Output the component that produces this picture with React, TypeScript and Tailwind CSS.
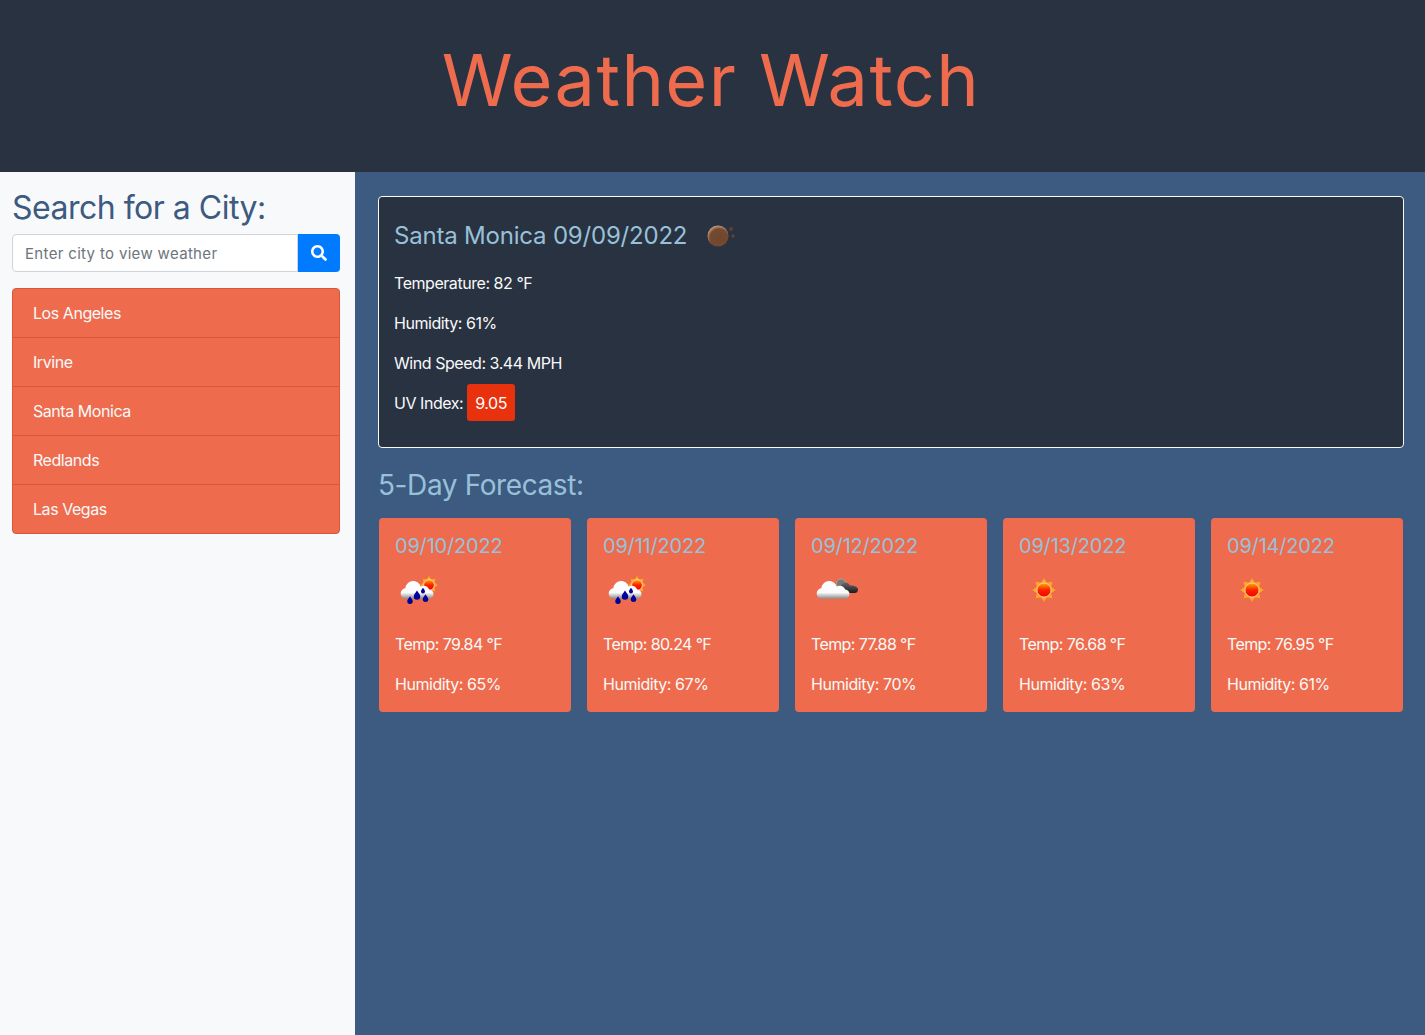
import React from "react";
import { FaSearch } from "react-icons/fa";

const cities = ["Los Angeles", "Irvine", "Santa Monica", "Redlands", "Las Vegas"];

const forecast = [
  { date: "09/10/2022", icon: "rain", temp: "79.84", humidity: "65" },
  { date: "09/11/2022", icon: "rain", temp: "80.24", humidity: "67" },
  { date: "09/12/2022", icon: "clouds", temp: "77.88", humidity: "70" },
  { date: "09/13/2022", icon: "sun", temp: "76.68", humidity: "63" },
  { date: "09/14/2022", icon: "sun", temp: "76.95", humidity: "61" },
];

const Defs = () => (
  <defs>
    <linearGradient id="sunFill" x1="0" y1="0" x2="0" y2="1">
      <stop offset="0" stopColor="#ffb000" />
      <stop offset="0.5" stopColor="#ff2000" />
      <stop offset="1" stopColor="#f00000" />
    </linearGradient>
    <linearGradient id="cloudFill" x1="0" y1="0" x2="0" y2="1">
      <stop offset="0" stopColor="#ffffff" />
      <stop offset="0.65" stopColor="#fbfbfb" />
      <stop offset="1" stopColor="#8a8a8a" />
    </linearGradient>
    <linearGradient id="darkFill" x1="0" y1="0" x2="0" y2="1">
      <stop offset="0" stopColor="#666666" />
      <stop offset="1" stopColor="#1c1c1c" />
    </linearGradient>
    <radialGradient id="moonFill" cx="0.55" cy="0.6" r="0.62">
      <stop offset="0" stopColor="#6f4630" />
      <stop offset="0.7" stopColor="#75492f" />
      <stop offset="1" stopColor="#d0a88a" />
    </radialGradient>
  </defs>
);

const Sun = ({ cx, cy, r }: { cx: number; cy: number; r: number }) => (
  <g>
    {[0, 45, 90, 135, 180, 225, 270, 315].map((a) => (
      <polygon
        key={a}
        points={`${cx - r * 0.55},${cy - r * 1.05} ${cx},${cy - r * 1.85} ${cx + r * 0.55},${cy - r * 1.05}`}
        fill="#ffa820"
        transform={`rotate(${a} ${cx} ${cy})`}
      />
    ))}
    <circle cx={cx} cy={cy} r={r * 1.12} fill="url(#sunFill)" stroke="#ffd8b0" strokeWidth="0.9" />
  </g>
);

const Cloud = () => (
  <path
    transform="translate(-3.500 -3) scale(1.15)"
    d="M13 32c-3 0-5-2-5-4.600 0-2.400 1.800-4.300 4-4.500 0.400-3.600 3.300-6.400 6.800-6.400 3.100 0 5.700 2 6.600 4.900 0.800-0.500 1.700-0.700 2.600-0.700 2.200 0 4 1.300 4.800 3.200 2.300 0.100 3.700 1.900 3.700 3.900 0 2.400-1.800 4.200-4.200 4.200z"
    fill="url(#cloudFill)"
  />
);

const Drop = ({ x, y, s = 1 }: { x: number; y: number; s?: number }) => (
  <path
    d={`M${x} ${y - 3.4 * s}c${1.2 * s} ${2 * s} ${2.500 * s} ${3 * s} ${2.500 * s} ${4.500 * s}a${2.500 * s} ${2.500 * s} 0 0 1 ${-5 * s} 0c0 ${-1.500 * s} ${1.300 * s} ${-2.500 * s} ${2.500 * s} ${-4.500 * s}z`}
    fill="#00009c"
  />
);

const WeatherIcon = ({ kind }: { kind: string }) => (
  <svg width="50" height="50" viewBox="0 0 50 50" className="block">
    <Defs />
    {kind === "rain" && (
      <>
        <Sun cx={34} cy={20} r={4.800} />
        <Cloud />
        <Drop x={15} y={35} s={1.100} />
        <Drop x={22} y={30} s={1.300} />
        <Drop x={28} y={25.500} s={0.800} />
        <Drop x={30.500} y={33} s={1.100} />
      </>
    )}
    {kind === "clouds" && (
      <>
        <circle cx="30" cy="18.500" r="4.500" fill="#777" stroke="#aaa" strokeWidth="0.8" />
        <path d="M30 28c-2 0-3-1.400-3-3 0-3 1.600-4 3.200-4.200 0.800-1.700 2.400-3.200 4.200-3.200 2 0 3.700 1.200 4.500 3 0.400-0.100 0.700-0.100 1.100-0.100 3.500 0 7 1.600 7 3.900 0 2.200-1.500 3.600-3.300 3.600z" fill="url(#darkFill)" />
        <Cloud />
      </>
    )}
    {kind === "sun" && <Sun cx={25} cy={25} r={6.300} />}
    {kind === "moon" && (
      <>
        <circle cx="24" cy="25" r="10.500" fill="url(#moonFill)" />
        <circle cx="37" cy="18" r="2" fill="#5f4030" />
        <circle cx="39" cy="25" r="1.800" fill="#5f4030" />
      </>
    )}
  </svg>
);

const App = () => {
  return (
    <div className="min-h-[1035px] flex flex-col font-['Inter','Lato',sans-serif] text-base tracking-[-0.45px]">
      {/* Header */}
      <header className="h-[172px] bg-[#293241] flex justify-center pt-[37px]">
        <h1 className="text-[72px] leading-[86px] font-normal text-[#ee6c4d] tracking-[1.4px] ml-[-3px]">Weather Watch</h1>
      </header>

      <div className="flex flex-1">
        {/* Sidebar */}
        <aside className="w-[355px] bg-[#f8f9fa] pl-3 pr-[15px] pt-[17px]">
          <h2 className="text-[32px] leading-[38px] font-normal text-[#3d5a80] mb-[7px] tracking-[-0.5px]">Search for a City:</h2>
          <div className="flex h-[38px] mb-4">
            <input
              placeholder="Enter city to view weather"
              className="flex-1 min-w-0 px-3 pt-[2px] bg-white border border-[#ced4da] rounded-l text-[15px] tracking-[0.33px] text-[#495057] placeholder:text-[#6c757d] outline-none"
            />
            <button className="w-[42px] bg-[#007bff] text-white rounded-r flex items-center justify-center">
              <FaSearch size={16} />
            </button>
          </div>
          <ul className="border border-[#d9563a] rounded overflow-hidden bg-[#ee6c4d] text-[#f8f9fa]">
            {cities.map((city, i) => (
              <li
                key={city}
                className={i > 0 ? "h-[49px] px-5 flex items-center border-t border-[#d9563a]" : "h-[48px] px-5 flex items-center"}
              >
                {city}
              </li>
            ))}
          </ul>
        </aside>

        {/* Main */}
        <main className="flex-1 bg-[#3d5a80] pl-[23px] pr-[21px] pt-6">
          <section className="h-[252px] bg-[#293241] border border-[#f8f9fa] rounded pl-[15px] pt-[21px] text-[#f8f9fa]">
            <div className="flex items-center h-[36px] mb-[17px]">
              <h3 className="w-[294px] text-2xl leading-[36px] font-normal text-[#98c1d9] tracking-[-0.2px] whitespace-nowrap">Santa Monica 09/09/2022</h3>
              <div className="ml-[6px]">
                <WeatherIcon kind="moon" />
              </div>
            </div>
            <p className="h-6 leading-6 mb-4">Temperature: 82 °F</p>
            <p className="h-6 leading-6 mb-4">Humidity: 61%</p>
            <p className="h-6 leading-6 mb-[9px]">Wind Speed: 3.44 MPH</p>
            <p className="flex items-center h-[37px]">
              UV Index:
              <span className="ml-1 h-[37px] px-2 flex items-center bg-[#e8320e] rounded-[3px] text-white">9.05</span>
            </p>
          </section>

          <h3 className="mt-[18px] mb-[14px] text-[28px] leading-[38px] font-normal text-[#98c1d9] tracking-[-0.4px]">5-Day Forecast:</h3>

          <div className="flex gap-4 pl-px pr-px">
            {forecast.map((day) => (
              <div key={day.date} className="w-[192px] h-[194px] bg-[#ee6c4d] rounded pl-4 pt-[14px] text-[#f8f9fa]">
                <h4 className="text-xl leading-7 font-normal text-[#98c1d9] tracking-[-0.2px]">{day.date}</h4>
                <div className="h-[50px] mt-[5px] mb-[17px]">
                  <WeatherIcon kind={day.icon} />
                </div>
                <p className="h-6 leading-6 mb-4 tracking-[-0.6px]">Temp: {day.temp} °F</p>
                <p className="h-6 leading-6">Humidity: {day.humidity}%</p>
              </div>
            ))}
          </div>
        </main>
      </div>
    </div>
  );
};

export default App;
